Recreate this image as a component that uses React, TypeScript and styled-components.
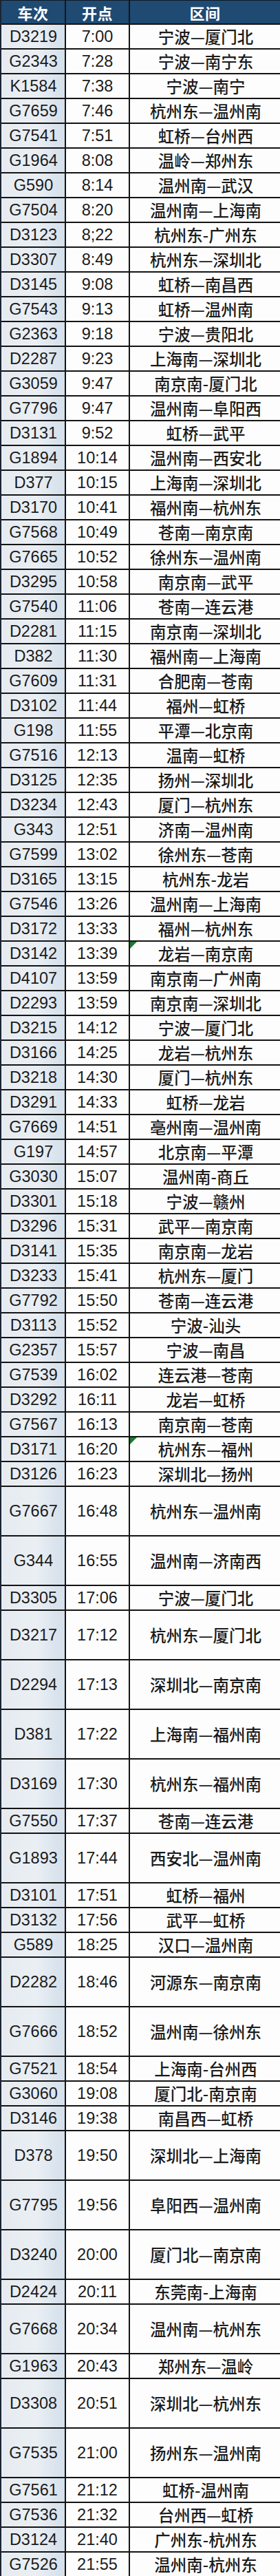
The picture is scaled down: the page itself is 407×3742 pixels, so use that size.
import React from "react";
import styled, { createGlobalStyle } from "styled-components";

const GlobalStyle = createGlobalStyle`
  html, body {
    margin: 0;
    padding: 0;
    overflow: hidden;
    background: #ffffff;
  }
  * { box-sizing: border-box; }
`;

type Train = { no: string; time: string; route: string; tall?: boolean; mark?: boolean };

const trains: Train[] = [
  { no: "D3219", time: "7:00", route: "宁波—厦门北" },
  { no: "G2343", time: "7:28", route: "宁波—南宁东" },
  { no: "K1584", time: "7:38", route: "宁波—南宁" },
  { no: "G7659", time: "7:46", route: "杭州东—温州南" },
  { no: "G7541", time: "7:51", route: "虹桥—台州西" },
  { no: "G1964", time: "8:08", route: "温岭—郑州东" },
  { no: "G590", time: "8:14", route: "温州南—武汉" },
  { no: "G7504", time: "8:20", route: "温州南—上海南" },
  { no: "D3123", time: "8;22", route: "杭州东-广州东" },
  { no: "D3307", time: "8:49", route: "杭州东—深圳北" },
  { no: "D3145", time: "9:08", route: "虹桥—南昌西" },
  { no: "G7543", time: "9:13", route: "虹桥—温州南" },
  { no: "G2363", time: "9:18", route: "宁波—贵阳北" },
  { no: "D2287", time: "9:23", route: "上海南—深圳北" },
  { no: "G3059", time: "9:47", route: "南京南-厦门北" },
  { no: "G7796", time: "9:47", route: "温州南—阜阳西" },
  { no: "D3131", time: "9:52", route: "虹桥—武平" },
  { no: "G1894", time: "10:14", route: "温州南—西安北" },
  { no: "D377", time: "10:15", route: "上海南—深圳北" },
  { no: "D3170", time: "10:41", route: "福州南—杭州东" },
  { no: "G7568", time: "10:49", route: "苍南—南京南" },
  { no: "G7665", time: "10:52", route: "徐州东—温州南" },
  { no: "D3295", time: "10:58", route: "南京南—武平" },
  { no: "G7540", time: "11:06", route: "苍南—连云港" },
  { no: "D2281", time: "11:15", route: "南京南—深圳北" },
  { no: "D382", time: "11:30", route: "福州南—上海南" },
  { no: "G7609", time: "11:31", route: "合肥南—苍南" },
  { no: "D3102", time: "11:44", route: "福州—虹桥" },
  { no: "G198", time: "11:55", route: "平潭—北京南" },
  { no: "G7516", time: "12:13", route: "温南—虹桥" },
  { no: "D3125", time: "12:35", route: "扬州—深圳北" },
  { no: "D3234", time: "12:43", route: "厦门—杭州东" },
  { no: "G343", time: "12:51", route: "济南—温州南" },
  { no: "G7599", time: "13:02", route: "徐州东—苍南" },
  { no: "D3165", time: "13:15", route: "杭州东-龙岩" },
  { no: "G7546", time: "13:26", route: "温州南—上海南" },
  { no: "D3172", time: "13:33", route: "福州—杭州东" },
  { no: "D3142", time: "13:39", route: "龙岩—南京南", mark: true },
  { no: "D4107", time: "13:59", route: "南京南—广州南" },
  { no: "D2293", time: "13:59", route: "南京南—深圳北" },
  { no: "D3215", time: "14:12", route: "宁波—厦门北" },
  { no: "D3166", time: "14:25", route: "龙岩—杭州东" },
  { no: "D3218", time: "14:30", route: "厦门—杭州东" },
  { no: "D3291", time: "14:33", route: "虹桥—龙岩" },
  { no: "G7669", time: "14:51", route: "亳州南—温州南" },
  { no: "G197", time: "14:57", route: "北京南—平潭" },
  { no: "G3030", time: "15:07", route: "温州南-商丘" },
  { no: "D3301", time: "15:18", route: "宁波—赣州" },
  { no: "D3296", time: "15:31", route: "武平—南京南" },
  { no: "D3141", time: "15:35", route: "南京南—龙岩" },
  { no: "D3233", time: "15:41", route: "杭州东—厦门" },
  { no: "G7792", time: "15:50", route: "苍南—连云港" },
  { no: "D3113", time: "15:52", route: "宁波-汕头" },
  { no: "G2357", time: "15:57", route: "宁波—南昌" },
  { no: "G7539", time: "16:02", route: "连云港—苍南" },
  { no: "D3292", time: "16:11", route: "龙岩—虹桥" },
  { no: "G7567", time: "16:13", route: "南京南—苍南" },
  { no: "D3171", time: "16:20", route: "杭州东—福州", mark: true },
  { no: "D3126", time: "16:23", route: "深圳北—扬州" },
  { no: "G7667", time: "16:48", route: "杭州东—温州南", tall: true },
  { no: "G344", time: "16:55", route: "温州南—济南西", tall: true },
  { no: "D3305", time: "17:06", route: "宁波—厦门北" },
  { no: "D3217", time: "17:12", route: "杭州东—厦门北", tall: true },
  { no: "D2294", time: "17:13", route: "深圳北—南京南", tall: true },
  { no: "D381", time: "17:22", route: "上海南—福州南", tall: true },
  { no: "D3169", time: "17:30", route: "杭州东—福州南", tall: true },
  { no: "G7550", time: "17:37", route: "苍南—连云港" },
  { no: "G1893", time: "17:44", route: "西安北—温州南", tall: true },
  { no: "D3101", time: "17:51", route: "虹桥—福州" },
  { no: "D3132", time: "17:56", route: "武平—虹桥" },
  { no: "G589", time: "18:25", route: "汉口—温州南" },
  { no: "D2282", time: "18:46", route: "河源东—南京南", tall: true },
  { no: "G7666", time: "18:52", route: "温州南—徐州东", tall: true },
  { no: "G7521", time: "18:54", route: "上海南-台州西" },
  { no: "G3060", time: "19:08", route: "厦门北-南京南" },
  { no: "D3146", time: "19:38", route: "南昌西—虹桥" },
  { no: "D378", time: "19:50", route: "深圳北—上海南", tall: true },
  { no: "G7795", time: "19:56", route: "阜阳西—温州南", tall: true },
  { no: "D3240", time: "20:00", route: "厦门北—南京南", tall: true },
  { no: "D2424", time: "20:11", route: "东莞南-上海南" },
  { no: "G7668", time: "20:34", route: "温州南—杭州东", tall: true },
  { no: "G1963", time: "20:43", route: "郑州东—温岭" },
  { no: "D3308", time: "20:51", route: "深圳北—杭州东", tall: true },
  { no: "G7535", time: "21:00", route: "扬州东—温州南", tall: true },
  { no: "G7561", time: "21:12", route: "虹桥-温州南" },
  { no: "G7536", time: "21:32", route: "台州西—虹桥" },
  { no: "D3124", time: "21:40", route: "广州东-杭州东" },
  { no: "G7526", time: "21:55", route: "温州南-杭州东" },
];

const LINE = "#141414";

const Table = styled.div`
  width: 407px;
  display: grid;
  grid-template-columns: 94px 93px 220px;
  border-left: 2px solid #1b2433;
  font-family: "Liberation Sans", Arial, "Noto Sans CJK SC", sans-serif;
`;

const HeadCell = styled.div`
  height: 36px;
  display: flex;
  align-items: center;
  justify-content: center;
  background: #1f4a72;
  color: #ffffff;
  font-family: "Noto Sans CJK SC", sans-serif;
  font-weight: 700;
  font-size: 22px;
  letter-spacing: 0.5px;
  border-top: 1px solid #0f1a26;
  border-right: 2px solid #1a1414;
  border-bottom: 2px solid ${LINE};
`;

const Cell = styled.div<{ $tall?: boolean }>`
  position: relative;
  height: ${(p) => (p.$tall ? 72 : 36)}px;
  display: flex;
  align-items: center;
  justify-content: center;
  border-right: 2px solid ${LINE};
  border-bottom: 2px solid ${LINE};
  color: #1b1b1b;
  background: #fdfdfd;
  white-space: nowrap;
`;

const NoCell = styled(Cell)`
  background: linear-gradient(to right, #e6ebf1 0%, #eaeff4 55%, #dde6ef 80%, #d4dfea 100%);
  font-size: 23.5px;
  padding-left: 1px;
`;

const TimeCell = styled(Cell)`
  font-size: 23.5px;
  padding-top: 1px;
`;

const RouteCell = styled(Cell)`
  font-family: "Noto Sans CJK SC", "Liberation Sans", sans-serif;
  font-size: 23.5px;
  font-weight: 500;
  padding-left: 2px;
`;

const Mark = styled.span`
  position: absolute;
  left: 0;
  top: 0;
  width: 0;
  height: 0;
  border-top: 10px solid #1f7a2c;
  border-right: 10px solid transparent;
`;

export default function App() {
  return (
    <>
      <GlobalStyle />
      <Table>
        <HeadCell>车次</HeadCell>
        <HeadCell>开点</HeadCell>
        <HeadCell>区间</HeadCell>
        {trains.map((t, i) => (
          <React.Fragment key={i}>
            <NoCell $tall={t.tall}>{t.no}</NoCell>
            <TimeCell $tall={t.tall}>{t.time}</TimeCell>
            <RouteCell $tall={t.tall}>
              {t.mark && <Mark />}
              {t.route}
            </RouteCell>
          </React.Fragment>
        ))}
      </Table>
    </>
  );
}
